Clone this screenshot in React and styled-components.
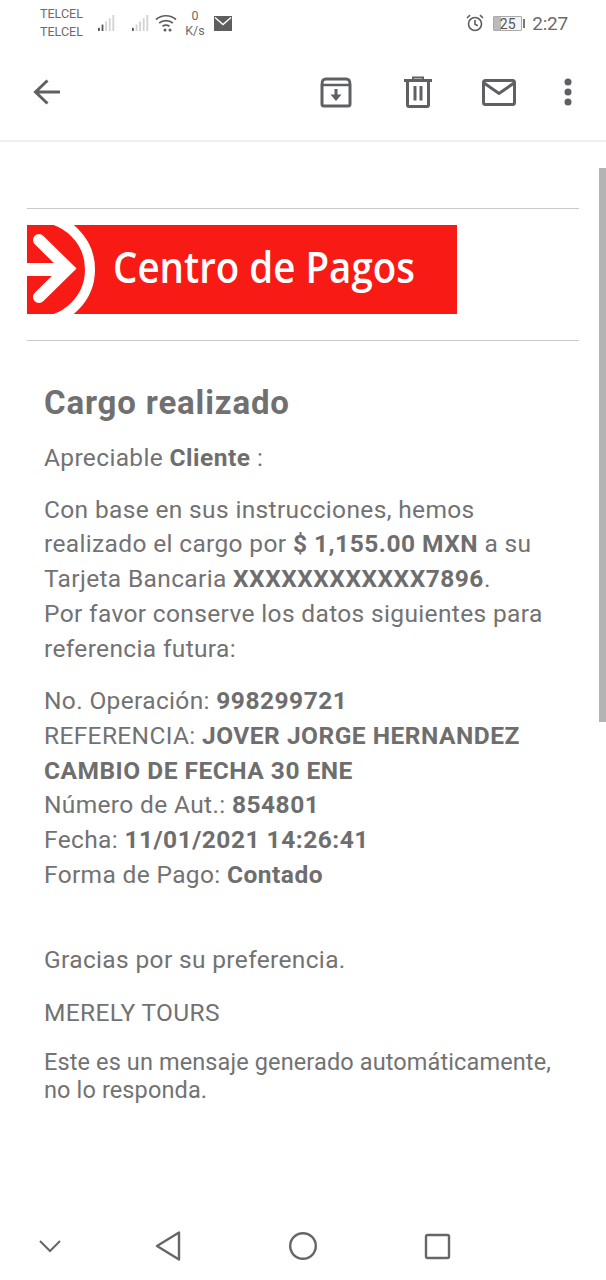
import React from "react";
import styled, { createGlobalStyle } from "styled-components";

const Global = createGlobalStyle`
  html, body { margin: 0; padding: 0; background: #fff; }
  body { font-family: Roboto, "Liberation Sans", sans-serif; color: #707070; }
`;

const Page = styled.div`
  position: relative;
  width: 606px;
  height: 1280px;
  overflow: hidden;
  display: flex;
  flex-direction: column;
  background: #fff;
`;

const StatusBar = styled.div`
  height: 50px;
  box-sizing: border-box;
  display: flex;
  align-items: center;
  padding: 0 38px 4px 40px;
  color: #6a6a6a;
`;
const Carriers = styled.div`
  width: 50px;
  font-size: 12.5px;
  line-height: 18px;
`;
const Speed = styled.div`
  width: 24px;
  margin-left: 6px;
  font-size: 12.5px;
  line-height: 15px;
  text-align: center;
`;
const StatusGroup = styled.div`
  display: flex;
  align-items: center;
  margin-left: ${(p) => p.$left || 0}px;
`;
const Spacer = styled.div`
  flex: 1;
`;
const Battery = styled.div`
  width: 29px;
  height: 15px;
  box-sizing: border-box;
  border: 1px solid #aaa;
  margin-left: 9px;
  font-size: 14px;
  line-height: 14px;
  text-align: center;
  color: #555;
  background: linear-gradient(90deg, #bbb 25%, #f4f4f4 25%);
  border-radius: 1px;
`;
const BatteryTip = styled.div`
  width: 2px;
  height: 9px;
  margin-left: 1px;
  background: #777;
`;
const Clock = styled.div`
  margin-left: 7px;
  font-size: 19px;
  letter-spacing: -0.2px;
  color: #6a6a6a;
`;

const Toolbar = styled.div`
  height: 92px;
  box-sizing: border-box;
  border-bottom: 2px solid #eeeeee;
  display: flex;
  align-items: center;
  padding: 0 34px 6px 32px;
  color: #5f6063;
`;
const ToolIcon = styled.div`
  display: flex;
  margin-left: ${(p) => p.$left || 0}px;
`;

const Content = styled.div`
  display: flex;
  flex-direction: column;
  padding: 66px 27px 0 27px;
`;
const Rule = styled.div`
  height: 1px;
  background: #c9c9c9;
`;
const Banner = styled.div`
  position: relative;
  width: 430px;
  height: 89px;
  margin: 16px 0 26px;
  background: #f81a15;
  overflow: hidden;
  display: flex;
  align-items: center;
`;
const BannerText = styled.div`
  margin-left: 86px;
  font-family: "Open Sans", sans-serif;
  font-weight: 600;
  font-size: 43px;
  transform: scaleX(0.895);
  transform-origin: left center;
  white-space: nowrap;
  color: #fff;
  position: relative;
  top: -3px;
`;
const BannerMark = styled.svg`
  position: absolute;
  left: 0;
  top: 0;
`;

const Message = styled.div`
  padding: 0 17px;
  font-size: 24.5px;
  letter-spacing: 0.35px;
  color: #727272;
  b { font-weight: 700; color: #6e6e6e; letter-spacing: 0.5px; }
`;
const Title = styled.h1`
  margin: 42px 0 0;
  font-size: 33px;
  letter-spacing: 0.85px;
  line-height: 40px;
  font-weight: 700;
  color: #707070;
`;
const Para = styled.p`
  margin: ${(p) => p.$top ?? 17}px 0 0;
  line-height: ${(p) => p.$lh || 34.7}px;
`;
const Footnote = styled(Para)`
  font-size: 23.5px;
  letter-spacing: 0.12px;
`;

const NavBar = styled.div`
  position: absolute;
  left: 0;
  right: 0;
  bottom: 14px;
  height: 40px;
  display: flex;
  align-items: center;
  color: #666;
`;
const NavItem = styled.div`
  position: absolute;
  left: ${(p) => p.$x}px;
  display: flex;
`;

const Scrollbar = styled.div`
  position: absolute;
  left: 599px;
  top: 168px;
  width: 7px;
  height: 554px;
  background: #b4b4b4;
`;

const SignalIcon = ({ level }) => (
  <svg width="20" height="18" viewBox="0 0 20 18">
    {[0, 1, 2, 3, 4].map((i) => (
      <rect
        key={i}
        x={1 + i * 3.6}
        y={17 - (i + 1) * 3.2}
        width="1.8"
        height={(i + 1) * 3.2}
        fill={i < level ? "#555" : "#d2d2d2"}
      />
    ))}
  </svg>
);

export default function App() {
  return (
    <Page>
      <Global />
      <StatusBar>
        <Carriers>
          TELCEL
          <br />
          TELCEL
        </Carriers>
        <StatusGroup $left={7}>
          <SignalIcon level={2} />
        </StatusGroup>
        <StatusGroup $left={14}>
          <SignalIcon level={1} />
        </StatusGroup>
        <StatusGroup $left={4}>
          <svg width="22" height="20" viewBox="0 0 22 20" fill="none" stroke="#5e5e5e" strokeWidth="1.7">
            <path d="M1 6.5C6.5 1.5 15.5 1.5 21 6.5" />
            <path d="M4.2 10C8 6.8 14 6.8 17.8 10" />
            <path d="M7.5 13.3C9.7 11.7 12.3 11.7 14.5 13.3" />
            <circle cx="10" cy="17" r="1.5" fill="#5e5e5e" stroke="none" />
            <circle cx="15" cy="17" r="1.5" fill="#5e5e5e" stroke="none" />
          </svg>
        </StatusGroup>
        <Speed>
          0
          <br />
          K/s
        </Speed>
        <StatusGroup $left={7}>
          <svg width="18" height="15" viewBox="0 0 18 15">
            <rect width="18" height="15" fill="#5e5e5e" />
            <path d="M1 1.5L9 8.5L17 1.5" fill="none" stroke="#fff" strokeWidth="1.4" />
          </svg>
        </StatusGroup>
        <Spacer />
        <svg width="18" height="18" viewBox="0 0 18 18" fill="none" stroke="#5e5e5e" strokeWidth="1.6">
          <circle cx="9" cy="10" r="6.5" />
          <path d="M9 6v4.3l2.8 1.5" />
          <path d="M1 4L4 1.2M17 4L14 1.2" />
        </svg>
        <Battery>25</Battery>
        <BatteryTip />
        <Clock>2:27</Clock>
      </StatusBar>

      <Toolbar>
        <ToolIcon>
          <svg width="29" height="30" viewBox="0 0 29 30" fill="none" stroke="currentColor" strokeWidth="3">
            <path d="M28 15H4M15.500 3.500L3.500 15L15.500 26.500" />
          </svg>
        </ToolIcon>
        <Spacer />
        <ToolIcon>
          <svg width="32" height="32" viewBox="0 0 32 32" fill="none" stroke="currentColor" strokeWidth="3">
            <path d="M2 8.500C2 4 3 3 6 3H26C29 3 30 4 30 8.500V28C30 29.500 29.500 30 28 30H4C2.500 30 2 29.500 2 28Z" />
            <path d="M2 9H30" strokeWidth="2.500" />
            <path d="M16 13V22" />
            <path d="M10.500 18.500H21.500L16 25Z" fill="currentColor" stroke="none" />
          </svg>
        </ToolIcon>
        <ToolIcon $left={52}>
          <svg width="28" height="32" viewBox="0 0 28 32" fill="none" stroke="currentColor" strokeWidth="3">
            <path d="M0 4.500H28" />
            <path d="M9 4V1.500H19V4" strokeWidth="2" />
            <path d="M3.500 5V29C3.500 30 4 30.500 5 30.500H23C24 30.500 24.500 30 24.500 29V5" />
            <path d="M11 10V24.500M17 10V24.500" />
          </svg>
        </ToolIcon>
        <ToolIcon $left={50}>
          <svg width="34" height="27" viewBox="0 0 34 27" fill="none" stroke="currentColor" strokeWidth="3">
            <rect x="1.500" y="1.500" width="31" height="24" rx="2" />
            <path d="M2 4L17 14.500L32 4" />
          </svg>
        </ToolIcon>
        <ToolIcon $left={48}>
          <svg width="8" height="28" viewBox="0 0 8 28" fill="currentColor">
            <circle cx="4" cy="4" r="3.500" />
            <circle cx="4" cy="14" r="3.500" />
            <circle cx="4" cy="24" r="3.500" />
          </svg>
        </ToolIcon>
      </Toolbar>

      <Content>
        <Rule />
        <Banner>
          <BannerMark width="100" height="89" viewBox="0 0 100 89">
            <circle cx="11" cy="44.500" r="52" fill="none" stroke="#fff" strokeWidth="10" />
            <path d="M0 44.500H40" stroke="#fff" strokeWidth="13" fill="none" />
            <path d="M12 15L41 43.500L12 72" stroke="#fff" strokeWidth="12" strokeLinecap="round" strokeLinejoin="miter" fill="none" />
          </BannerMark>
          <BannerText>Centro de Pagos</BannerText>
        </Banner>
        <Rule />
        <Message>
          <Title>Cargo realizado</Title>
          <Para $top={18}>
            Apreciable <b>Cliente</b> :
          </Para>
          <Para>
            Con base en sus instrucciones, hemos
            <br />
            realizado el cargo por <b>$ 1,155.00 MXN</b> a su
            <br />
            Tarjeta Bancaria <b>XXXXXXXXXXXX7896</b>.
            <br />
            Por favor conserve los datos siguientes para
            <br />
            referencia futura:
          </Para>
          <Para $top={18}>
            No. Operación: <b>998299721</b>
            <br />
            REFERENCIA: <b>JOVER JORGE HERNANDEZ</b>
            <br />
            <b>CAMBIO DE FECHA 30 ENE</b>
            <br />
            Número de Aut.: <b>854801</b>
            <br />
            Fecha: <b>11/01/2021 14:26:41</b>
            <br />
            Forma de Pago: <b>Contado</b>
          </Para>
          <Para $top={51}>Gracias por su preferencia.</Para>
          <Para $top={18}>MERELY TOURS</Para>
          <Footnote $top={17} $lh={28}>
            Este es un mensaje generado automáticamente,
            <br />
            no lo responda.
          </Footnote>
        </Message>
      </Content>

      <Scrollbar />

      <NavBar>
        <NavItem $x={38}>
          <svg width="24" height="16" viewBox="0 0 24 16" fill="none" stroke="currentColor" strokeWidth="2">
            <path d="M2 3L12 13L22 3" />
          </svg>
        </NavItem>
        <NavItem $x={155}>
          <svg width="26" height="30" viewBox="0 0 26 30" fill="none" stroke="currentColor" strokeWidth="2.400" strokeLinejoin="round">
            <path d="M2 15L24 1.500V28.500Z" />
          </svg>
        </NavItem>
        <NavItem $x={288}>
          <svg width="30" height="30" viewBox="0 0 30 30" fill="none" stroke="currentColor" strokeWidth="2.400">
            <circle cx="15" cy="15" r="12.800" />
          </svg>
        </NavItem>
        <NavItem $x={424}>
          <svg width="27" height="27" viewBox="0 0 27 27" fill="none" stroke="currentColor" strokeWidth="2.400">
            <rect x="2" y="2" width="23" height="23" rx="1.500" />
          </svg>
        </NavItem>
      </NavBar>
    </Page>
  );
}
